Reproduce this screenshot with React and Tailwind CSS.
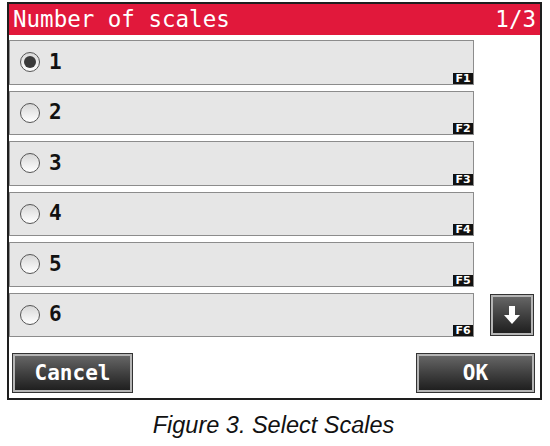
import React from "react";

const mono = { fontFamily: '"DejaVu Sans Mono", "Liberation Mono", monospace' };

function Radio({ checked }) {
  return (
    <div className="w-[20px] h-[20px] rounded-full border border-[#555] bg-gradient-to-b from-[#d8d8d8] to-white flex items-center justify-center shrink-0">
      {checked && <div className="w-[12px] h-[12px] rounded-full bg-[#3a3a3a]" />}
    </div>
  );
}

function Row({ n, checked, last }) {
  return (
    <div className="flex h-[44.5px]">
      <div className="relative w-[465px] h-full bg-[#e6e6e6] border border-[#8c8c8c] flex items-center pl-[10px] gap-[9px]">
        <Radio checked={checked} />
        <span className="text-[21px] font-bold text-[#111] leading-none" style={mono}>{n}</span>
        <div className="absolute right-0 bottom-0 w-[20px] h-[11px] bg-[#111] flex items-center justify-center">
          <span className="text-[11px] font-bold text-white leading-none" style={{ fontFamily: '"DejaVu Sans", sans-serif' }}>F{n}</span>
        </div>
      </div>
      <div className="flex-1 flex items-center pl-[16px]">
        {last && (
          <div className="w-[44px] h-[42px] border border-[#333] shadow-[inset_0_0_0_2px_#b5b5b5] bg-gradient-to-b from-[#6a6a6a] to-[#1c1c1c] flex items-center justify-center">
            <svg width="18" height="20" viewBox="0 0 18 20">
              <rect x="6" y="1" width="6" height="10" fill="white" />
              <polygon points="1,10 17,10 9,19" fill="white" />
            </svg>
          </div>
        )}
      </div>
    </div>
  );
}

function Btn({ label, w }) {
  return (
    <div
      className={`${w} h-[40px] border border-[#333] shadow-[inset_0_0_0_2px_#b5b5b5] bg-gradient-to-b from-[#6a6a6a] to-[#1c1c1c] flex items-center justify-center`}
    >
      <span className="text-white text-[21px] font-bold leading-none" style={mono}>{label}</span>
    </div>
  );
}

export default function App() {
  return (
    <div className="w-[550px] h-[446px] bg-white relative overflow-hidden">
      <div className="ml-[7px] mt-[2px] w-[535px] h-[398px] border-2 border-[#1e1e1e] flex flex-col">
        <div className="h-[31px] bg-[#e1183b] flex items-center justify-between px-[4px] text-white text-[22.5px] leading-none" style={mono}>
          <span>Number of scales</span>
          <span>1/3</span>
        </div>
        <div className="flex flex-col gap-[6px] pt-[5px]">
          {[1, 2, 3, 4, 5, 6].map((n) => (
            <Row key={n} n={n} checked={n === 1} last={n === 6} />
          ))}
        </div>
        <div className="flex justify-between mt-[16px] pl-[3px] pr-[5px]">
          <Btn label="Cancel" w="w-[121px]" />
          <Btn label="OK" w="w-[119px]" />
        </div>
      </div>
      <div className="text-center italic text-[23.5px] text-[#111] mt-[8px] pr-[3px]" style={{ fontFamily: '"Liberation Sans", Arial, sans-serif' }}>
        Figure 3. Select Scales
      </div>
    </div>
  );
}
